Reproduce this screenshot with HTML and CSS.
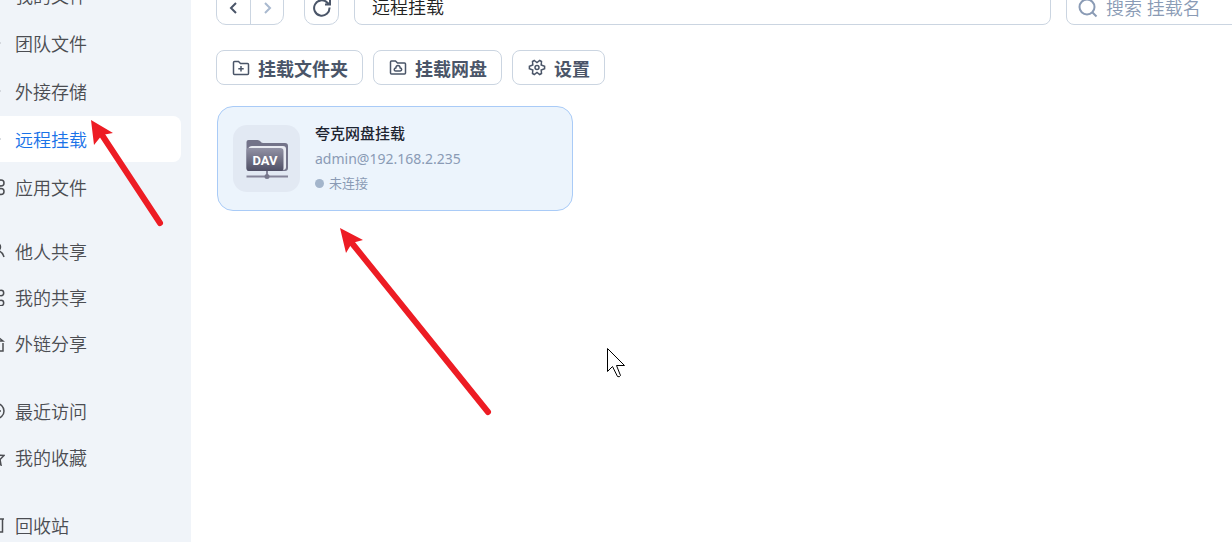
FILE: index.html
```html
<!DOCTYPE html>
<html lang="zh-CN">
<head>
<meta charset="utf-8">
<meta name="viewport" content="width=device-width, initial-scale=1.0">
<title>远程挂载</title>
<link rel="stylesheet" href="styles.css">
</head>
<body>
<div class="app">

<!-- Menu lateral -->
<nav class="sidebar">
<div class="nav-group">
<a class="nav-item" href="#"><svg class="icon" viewBox="0 0 18 18"><path class="faint" d="M3 9h10"/></svg>我的文件</a>
<a class="nav-item" href="#"><svg class="icon" viewBox="0 0 18 18"><path class="faint" d="M3 9h11"/></svg>团队文件</a>
<a class="nav-item" href="#"><svg class="icon" viewBox="0 0 18 18"><path class="faint" d="M3 9h11"/></svg>外接存储</a>
<a class="nav-item active" href="#"><svg class="icon" viewBox="0 0 18 18"><path class="faint" d="M3 9h11"/></svg>远程挂载</a>
<a class="nav-item" href="#"><svg class="icon" viewBox="0 0 18 18"><rect x="1" y="2" width="6" height="6" rx="2"/><rect x="1" y="11" width="6" height="6" rx="2"/><circle cx="14" cy="5" r="3"/><circle cx="14" cy="13.500" r="3"/></svg>应用文件</a>
</div>
<div class="nav-group nav-group-near">
<a class="nav-item" href="#"><svg class="icon" viewBox="0 0 18 18"><circle cx="9.500" cy="5" r="4"/><path d="M1 16c0-5 4-7 8-6M12 9c3 1 4 3 5 6"/></svg>他人共享</a>
<a class="nav-item" href="#"><svg class="icon" viewBox="0 0 18 18"><circle cx="3.500" cy="9" r="2.500"/><circle cx="14" cy="5" r="2.700"/><circle cx="14" cy="15" r="2.700"/><path d="M6 8l6-3M6 10l6 4"/></svg>我的共享</a>
<a class="nav-item" href="#"><svg class="icon" viewBox="0 0 18 18"><path d="M11 3l5 4h-5M9 17H2V7M11 17h5V9"/></svg>外链分享</a>
</div>
<div class="nav-group">
<a class="nav-item" href="#"><svg class="icon" viewBox="0 0 18 18"><circle cx="9.500" cy="9" r="7.500"/><path d="M9 5v4h5"/></svg>最近访问</a>
<a class="nav-item" href="#"><svg class="icon" viewBox="0 0 18 18"><path d="M9 2l2 5 6 .5-4 4 1 5.500-5-3-5 3 1-5.500-4-4 6-.5z"/></svg>我的收藏</a>
</div>
<div class="nav-group">
<a class="nav-item" href="#"><svg class="icon" viewBox="0 0 18 18"><path d="M1 3h16M3 3v13h12.500V3"/></svg>回收站</a>
</div>
</nav>

<!-- Contenido -->
<main class="content">
<div class="toolbar">
<div class="history">
<button type="button" aria-label="后退"><svg viewBox="0 0 16 16"><path d="M10 3L5 8l5 5"/></svg></button>
<button type="button" class="forward" aria-label="前进"><svg viewBox="0 0 16 16"><path d="M6 3l5 5-5 5"/></svg></button>
</div>
<button type="button" class="refresh" aria-label="刷新"><svg viewBox="0 0 20 20"><path d="M17.500 9.500a7.700 7.700 0 1 1-2.300-5l2.300 2M18 1.500v5h-5"/></svg></button>
<input class="path" type="text" aria-label="路径" value="远程挂载">
<label class="search">
<svg viewBox="0 0 20 20"><circle cx="9" cy="9" r="7.500"/><path d="M14.500 14.500l4 4"/></svg>
<input type="search" aria-label="搜索" placeholder="搜索 挂载名">
</label>
</div>

<div class="actions">
<button type="button"><svg viewBox="0 0 18 18"><path d="M1.500 3.500q0-1 1-1h4l2 2h7q1 0 1 1v9q0 1-1 1h-13q-1 0-1-1zM9 7v5.500M6.300 9.700h5.400"/></svg>挂载文件夹</button>
<button type="button"><svg viewBox="0 0 18 18"><path d="M1.500 3q0-1 1-1h4l2 2h7q1 0 1 1v9q0 1-1 1h-13q-1 0-1-1zM6.800 12q-1.800-.2-1.500-1.800.3-1 1.500-1.200 .3-2.500 2.200-2.500t2.200 2.500q1.300.2 1.500 1.300 0 1.500-1.500 1.700z"/></svg>挂载网盘</button>
<button type="button"><svg viewBox="0 0 18 18"><path d="M6.300 1.500l2.700 2 2.700-2 1.800 1-.3 3.400 3.400 1.300v2.600l-3.400 1.300.3 3.400-1.800 1-2.700-2-2.700 2-1.800-1 .3-3.400-3.400-1.300V7.200l3.400-1.300-.3-3.400z"/><circle cx="9" cy="8.500" r="2"/></svg>设置</button>
</div>

<section class="mounts">
<article class="mount-card">
<div class="mount-icon">
<svg viewBox="0 0 44 44">
<defs>
<linearGradient id="front" x1="0" y1="0" x2="0" y2="1"><stop offset="0" stop-color="#9292a5"/><stop offset="1" stop-color="#4f4f65"/></linearGradient>
</defs>
<path d="M1.500 5q0-2 2-2h9q2 0 3 1.500t3 1.500H40q3 0 3 3v22q0 3-3 3H4q-2.500 0-2.500-3z" fill="#737389"/>
<path d="M3 12q1-3 4-3h31q3 0 3 3v18q0 3-3 3h-4z" fill="#e9ebf2"/>
<path d="M1.500 13q0-2 2-2H35q3.500 0 3.500 3v17q0 3-2 3H4q-2.500 0-2.500-3z" fill="url(#front)"/>
<path d="M1.500 39.500H43M22 34v5" fill="none" stroke="#85859a" stroke-width="2"/>
<circle cx="22" cy="39.500" r="2.500" fill="#77778c"/>
<text class="dav" x="20" y="28">DAV</text>
</svg>
</div>
<div class="mount-info">
<h2>夸克网盘挂载</h2>
<p class="account">admin@192.168.2.235</p>
<p class="status"><span class="dot"></span>未连接</p>
</div>
</article>
</section>
</main>
</div>

<!-- Flechas y cursor por encima -->
<svg class="arrow arrow-menu" viewBox="0 0 74 110" aria-hidden="true"><path d="M1 1l22 13-11 2-8 10z"/><path class="shaft" d="M12 16l58 88"/></svg>
<svg class="arrow arrow-card" viewBox="0 0 154 190" aria-hidden="true"><path d="M1 1l23 12-11 3-6 10z"/><path class="shaft" d="M12 15l137 170"/></svg>
<svg class="pointer" viewBox="0 0 20 32" aria-hidden="true"><path d="M1.500 1.500v23l5-5 5 10q2 1 3-1l-4-10h8z"/></svg>
</body>
</html>
```

FILE: styles.css
```css
:root {
  --color-texto: #4a5568;
  --color-borde: #cbd5e1;
  --color-suave: #8a9bb5;
  --color-activo: #1a73e8;
  --color-flecha: #ed1c24;
}

* {
  box-sizing: border-box;
}

body {
  margin: 0;
  background: #fff;
  color: var(--color-texto);
  font-family: "Noto Sans", "Noto Sans CJK SC", sans-serif;
  overflow: hidden;
}

button,
input {
  font: inherit;
  color: inherit;
}

svg {
  fill: none;
  stroke: currentColor;
  stroke-width: 1.5;
}

.app {
  display: flex;
  height: 100vh;
  overflow: hidden;
}

/* Menu lateral */
.sidebar {
  flex: none;
  width: 221px;
  margin-left: -30px;
  padding-right: 10px;
  background: #f0f4f9;
}

.nav-group {
  display: flex;
  flex-direction: column;
  margin-top: 22px;
}

.nav-group:first-child {
  gap: 2px;
  margin-top: -28px;
}

.nav-group-near {
  margin-top: 18px;
}

.nav-item {
  display: flex;
  align-items: center;
  gap: 10px;
  height: 46px;
  padding-left: 17px;
  border-radius: 8px;
  color: #4b4d52;
  font-size: 18px;
  font-weight: 350;
  text-decoration: none;
}

.nav-item.active {
  background: #fff;
  color: var(--color-activo);
}

.icon {
  width: 18px;
  height: 18px;
}

.icon .faint {
  stroke: #cdd1d6;
}

/* Contenido */
.content {
  flex: 1;
  min-width: 0;
  padding-left: 25px;
}

.toolbar {
  display: flex;
  gap: 15px;
  height: 35px;
  margin-top: -10px;
  margin-right: -74px;
}

.history {
  display: flex;
  margin-right: 5px;
  border: 1px solid var(--color-borde);
  border-radius: 10px;
}

.history button {
  display: flex;
  align-items: center;
  justify-content: center;
  width: 33px;
  padding: 0;
  border: 0;
  background: none;
}

.history .forward {
  border-left: 1px solid var(--color-borde);
  color: #a9b9cf;
}

.history svg {
  width: 16px;
  height: 16px;
  stroke-width: 2;
}

.refresh {
  display: flex;
  align-items: center;
  justify-content: center;
  width: 35px;
  padding: 0;
  border: 1px solid var(--color-borde);
  border-radius: 10px;
  background: #fff;
}

.refresh svg {
  flex: none;
  width: 20px;
  height: 20px;
  stroke-width: 2;
}

.path {
  flex: 1;
  min-width: 0;
  padding: 0 17px 3px;
  border: 1px solid var(--color-borde);
  border-radius: 8px;
  color: #222;
  font-size: 18px;
  font-weight: 350;
}

.search {
  display: flex;
  align-items: center;
  gap: 8px;
  width: 240px;
  padding-left: 11px;
  border: 1px solid var(--color-borde);
  border-radius: 8px;
  color: var(--color-suave);
}

.search svg {
  flex: none;
  width: 20px;
  height: 20px;
  stroke-width: 2;
}

.search input {
  width: 100%;
  min-width: 0;
  padding: 0;
  border: 0;
  outline: 0;
  background: none;
  font-size: 18px;
  font-weight: 350;
}

.search input::placeholder {
  color: var(--color-suave);
}

.actions {
  display: flex;
  gap: 10px;
  margin-top: 25px;
}

.actions button {
  display: flex;
  align-items: center;
  gap: 8px;
  height: 35px;
  padding: 0 14px 0 15px;
  border: 1px solid var(--color-borde);
  border-radius: 8px;
  background: #fff;
  font-size: 18px;
  font-weight: 700;
}

.actions svg {
  width: 18px;
  height: 18px;
}

.mounts {
  display: grid;
  grid-template-columns: 356px;
  margin: 21px 0 0 1px;
}

.mount-card {
  display: flex;
  align-items: center;
  gap: 15px;
  height: 105px;
  padding: 0 15px;
  border: 1px solid #a9cbf7;
  border-radius: 16px;
  background: #ecf4fc;
}

.mount-icon {
  display: flex;
  align-items: center;
  justify-content: center;
  width: 67px;
  height: 67px;
  border-radius: 14px;
  background: #e2e9f3;
}

.mount-icon svg {
  width: 44px;
  height: 44px;
  stroke: none;
}

.dav {
  fill: #fff;
  font-family: "Liberation Sans Narrow", Roboto, sans-serif;
  font-size: 13px;
  font-weight: 700;
  text-anchor: middle;
}

.mount-info h2,
.mount-info p {
  margin: 0;
  line-height: 25px;
}

.mount-info h2 {
  color: #1e2430;
  font-size: 15px;
  font-weight: 500;
}

.mount-info .account {
  color: var(--color-suave);
  font-size: 14px;
}

.mount-info .status {
  display: flex;
  align-items: center;
  gap: 5px;
  color: var(--color-suave);
  font-size: 13px;
}

.dot {
  width: 9px;
  height: 9px;
  border-radius: 50%;
  background: #a3b5cb;
}

/* Flechas y cursor */
.arrow {
  position: absolute;
  fill: var(--color-flecha);
  stroke: none;
}

.arrow .shaft {
  stroke: var(--color-flecha);
  stroke-width: 6;
  stroke-linecap: round;
}

.arrow-menu {
  top: 119px;
  left: 90px;
  width: 74px;
  height: 110px;
}

.arrow-card {
  top: 227px;
  left: 339px;
  width: 154px;
  height: 190px;
}

.pointer {
  position: absolute;
  top: 347px;
  left: 606px;
  width: 20px;
  height: 32px;
  fill: #fff;
  stroke: #000;
  stroke-width: 1;
}
```
